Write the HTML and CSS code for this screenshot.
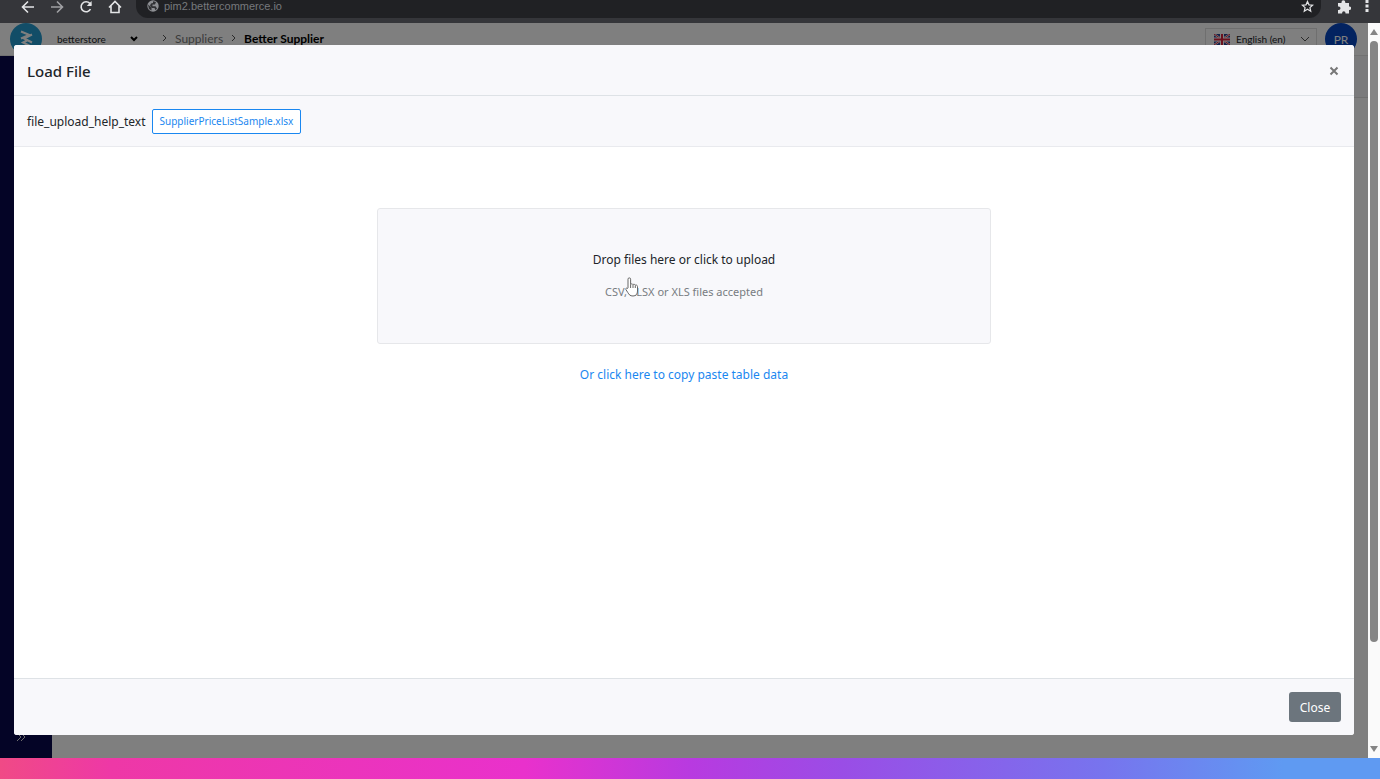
FILE: index.html
```html
<!DOCTYPE html>
<html lang="en">

<head>
    <meta charset="utf-8">
    <title>Better Supplier - Load File</title>
    <link rel="stylesheet" href="styles.css">
</head>

<body>
    <header class="browser-bar">
        <nav class="browser-nav">
            <button type="button" aria-label="Back">
                <svg width="14" height="14" viewBox="0 0 14 14"><path d="M13 7H2M7 1.5L1.5 7L7 12.5" /></svg>
            </button>
            <button type="button" aria-label="Forward" class="muted">
                <svg width="14" height="14" viewBox="0 0 14 14"><path d="M1 7h11M7 1.5L12.5 7L7 12.5" /></svg>
            </button>
            <button type="button" aria-label="Reload">
                <svg width="14" height="14" viewBox="0 0 14 14"><path d="M11.5 9.2A5 5 0 1 1 10.8 3.4L12 4.8" /><path class="fill" d="M12.6 1v5H7.8z" /></svg>
            </button>
            <button type="button" aria-label="Home">
                <svg width="14" height="14" viewBox="0 0 14 14"><path d="M1 7.500L7 1.500l6 6M3 6v6.500h8V6" /></svg>
            </button>
        </nav>
        <div class="address">
            <svg width="12" height="12" viewBox="0 0 12 12">
                <circle class="globe" cx="6" cy="6" r="5.700" />
                <path class="land" d="M1 4.500L4.500 7.500V10.500L2 9ZM6 1.200L9 2 8 4.500H5.500V6.200H8.500L10 8.500 8.500 10.300 7.500 8H5L3 5.500 4 3.600 6 3Z" />
            </svg>
            <input type="text" aria-label="Address" value="pim2.bettercommerce.io">
            <svg class="star" width="13" height="13" viewBox="0 0 14 14"><path d="M7 1.500l1.600 3.700 4 .35-3 2.650.9 3.900L7 10l-3.500 2.100.9-3.900-3-2.650 4-.35z" /></svg>
        </div>
        <div class="browser-tools">
            <button type="button" aria-label="Extensions">
                <svg width="14" height="14" viewBox="0 0 14 14"><path class="fill" d="M1 3h3.500V2.200a1.900 1.900 0 0 1 3.800 0V3H12v3.400h.4a1.800 1.800 0 0 1 0 3.600H12v3.500H8.500V13a1.700 1.700 0 0 0-3.400 0v.5H1V10h.8a1.700 1.700 0 0 0 0-3.400H1z" /></svg>
            </button>
            <button type="button" aria-label="Menu">
                <svg width="4" height="14" viewBox="0 0 4 14"><path class="fill" d="M.5 0h3v3h-3zM.5 4.500h3v3h-3zM.5 9h3v3h-3z" /></svg>
            </button>
        </div>
    </header>

    <main class="viewport">
        <div class="app">
            <div class="topbar">
                <svg class="logo" width="32" height="32" viewBox="0 0 32 32">
                    <circle cx="16" cy="16" r="16" />
                    <path d="M11 8.500l8 3.300-8 3.700M22 11.500l-8 4 8 4M18 17l-5 2.500 8 4" />
                </svg>
                <select class="store" aria-label="Store">
                    <option>betterstore</option>
                </select>
                <svg class="caret" width="8" height="6" viewBox="0 0 8 6"><path d="M1 1l3 3 3-3" /></svg>
                <nav class="crumbs">
                    <svg width="5" height="8" viewBox="0 0 5 8"><path d="M1 1l3 3-3 3" /></svg>
                    <a href="#">Suppliers</a>
                    <svg width="5" height="8" viewBox="0 0 5 8"><path d="M1 1l3 3-3 3" /></svg>
                    <strong>Better Supplier</strong>
                </nav>
                <div class="language">
                    <svg width="16" height="11" viewBox="0 0 16 11">
                        <path fill="#26408f" d="M0 0h16v11H0z" />
                        <path stroke="#fff" stroke-width="2" d="M0 0l16 11M16 0L0 11" />
                        <path stroke="#d8213d" d="M0 0l16 11M16 0L0 11" />
                        <path stroke="#fff" stroke-width="4" d="M8 0v11M0 5.500h16" />
                        <path stroke="#d8213d" stroke-width="2" d="M8 0v11M0 5.500h16" />
                    </svg>
                    <select aria-label="Language">
                        <option>English (en)</option>
                    </select>
                    <svg width="8" height="6" viewBox="0 0 8 6"><path class="line" d="M0 1l4 4 4-4" /></svg>
                </div>
                <button type="button" class="avatar">PR</button>
            </div>
            <div class="workspace">
                <aside class="sidebar">
                    <button type="button" aria-label="Expand menu">
                        <svg width="10" height="10" viewBox="0 0 10 10"><path d="M1 1l4 4-4 4M5 1l4 4-4 4" /></svg>
                    </button>
                </aside>
                <div class="content">
                    <div class="content-head"></div>
                </div>
            </div>

            <div class="backdrop">
                <section class="modal" role="dialog" aria-labelledby="modalTitle">
                    <div class="modal-header">
                        <h1 id="modalTitle">Load File</h1>
                        <button type="button" class="dismiss" aria-label="Dismiss">
                            <svg width="10" height="10" viewBox="0 0 10 10"><path d="M1.500 1.500l7 7M8.500 1.500l-7 7" /></svg>
                        </button>
                    </div>
                    <div class="modal-help">
                        <span>file_upload_help_text</span>
                        <a href="#" class="sample">SupplierPriceListSample.xlsx</a>
                    </div>
                    <div class="modal-body">
                        <button type="button" class="dropzone">
                            <span class="drop-title">Drop files here or click to upload</span>
                            <span class="drop-note">CSV, XLSX or XLS files accepted
                                <svg class="pointer" width="14" height="20" viewBox="0 0 14 20">
                                    <path d="M3 11V2.200a1.300 1.300 0 0 1 2.600 0V7.500c.5-.9 2-.8 2.400.2.700-.7 1.900-.5 2.300.5.900-.5 2.200 0 2.200 1.300V14c0 3-1.500 5-4.500 5-3 0-4-1.500-5.200-3.500L.9 12.500C.4 11.300 1.800 10.300 3 12" />
                                    <path d="M5.600 7.500V11M8 8v3M10.300 8.500V11" />
                                </svg>
                            </span>
                        </button>
                        <a href="#" class="paste">Or click here to copy paste table data</a>
                    </div>
                    <div class="modal-footer">
                        <button type="button" class="close">Close</button>
                    </div>
                </section>
            </div>
        </div>
        <div class="scrollbar">
            <svg width="8" height="6" viewBox="0 0 8 6"><path d="M4 0l4 6H0z" /></svg>
            <div class="track">
                <div class="thumb"></div>
            </div>
            <svg width="8" height="6" viewBox="0 0 8 6"><path d="M4 6L0 0h8z" /></svg>
        </div>
    </main>

    <footer class="ribbon"></footer>
</body>

</html>
```
FILE: styles.css
```css
* {
    box-sizing: border-box;
}

body {
    margin: 0;
    height: 100vh;
    display: flex;
    flex-direction: column;
    overflow: hidden;
    font-family: "Noto Sans", "Open Sans", sans-serif;
    font-size: 12px;
    color: #212529;
}

button,
input,
select {
    font: inherit;
    color: inherit;
    border: none;
    background: none;
    padding: 0;
    margin: 0;
}

button {
    cursor: pointer;
}

select {
    appearance: none;
}

a {
    color: #1a87f0;
    text-decoration: none;
}

svg {
    display: block;
    flex: none;
    fill: none;
}

/* browser bar */
.browser-bar {
    flex: none;
    display: flex;
    align-items: flex-start;
    height: 23px;
    padding: 0 11px 0 21px;
    background: #35363a;
}

.browser-bar svg {
    stroke: #e4e5e7;
    stroke-width: 1.6;
}

.browser-bar .fill {
    fill: #e4e5e7;
    stroke: none;
}

.browser-nav {
    display: flex;
    gap: 15px;
}

.browser-nav .muted svg {
    stroke: #a0a1a4;
}

.address {
    flex: 1;
    display: flex;
    align-items: center;
    gap: 5px;
    height: 18px;
    margin: 0 16px 0 14px;
    padding: 0 7px 6px 11px;
    border-radius: 0 0 12px 12px;
    background: #202124;
}

.address input {
    flex: 1;
    height: 12px;
    font-family: "Liberation Sans", Arial, sans-serif;
    font-size: 11px;
    color: #77797d;
}

.address .globe {
    fill: #8d8f93;
    stroke: none;
}

.address .land {
    fill: #303134;
    stroke: none;
}

.address .star {
    stroke-width: 1.3;
}

.browser-tools {
    display: flex;
    gap: 14px;
}

/* app page */
.viewport {
    flex: 1;
    display: flex;
    min-height: 0;
}

.app {
    position: relative;
    flex: 1;
    display: flex;
    flex-direction: column;
    background: #fff;
}

.topbar {
    display: flex;
    align-items: center;
    height: 33px;
    padding: 0 11px 0 10px;
    border-bottom: 1px solid #e4e4e4;
    font-family: Lato, sans-serif;
}

.logo circle {
    fill: #249bcf;
}

.logo path {
    stroke: #fff;
    stroke-width: 2;
}

.store {
    width: 72px;
    margin-left: 15px;
    font-family: Lato, sans-serif;
    font-size: 10px;
}

.caret {
    margin-left: 1px;
}

.caret path {
    stroke: #000;
    stroke-width: 2;
}

.crumbs {
    flex: 1;
    display: flex;
    align-items: center;
    gap: 8px;
    height: 30px;
    margin-left: 24px;
    padding-bottom: 2px;
    color: #000;
}

.crumbs strong {
    letter-spacing: normal;
}

.crumbs svg,
.language .line {
    stroke: #555;
}

.crumbs a {
    color: #777;
}

.language {
    display: flex;
    align-items: center;
    gap: 6px;
    height: 22px;
    padding: 0 7px 0 8px;
    margin-right: 8px;
    border: 1px solid #dedede;
    font-size: 10px;
}

.language select {
    width: 59px;
}

.avatar {
    width: 32px;
    height: 32px;
    border-radius: 50%;
    background: #0646c0;
    color: #fff;
}

.workspace {
    flex: 1;
    display: flex;
}

.sidebar {
    display: flex;
    align-items: flex-end;
    width: 52px;
    padding: 0 16px 16px;
    background: #08084c;
}

.sidebar svg {
    stroke: #ddd;
}

.content {
    flex: 1;
}

.content-head {
    height: 42px;
    background: #f7f7f8;
    border-bottom: 1px solid #e0e0e0;
}

/* modal */
.backdrop {
    position: absolute;
    inset: 0;
    display: flex;
    padding: 22px 14px 23px;
    background: rgba(0, 0, 0, 0.5);
}

.modal {
    flex: 1;
    display: flex;
    flex-direction: column;
    border-radius: 3px;
    background: #fff;
    overflow: hidden;
}

.modal-header,
.modal-help,
.modal-footer {
    display: flex;
    align-items: center;
    padding: 0 13px;
    background: #f8f8fb;
}

.modal-header {
    justify-content: space-between;
    height: 51px;
    padding-top: 2px;
    padding-right: 15px;
    border-bottom: 1px solid #dee2e6;
}

.modal-header h1 {
    margin: 0;
    font-size: 15px;
    font-weight: 500;
}

.dismiss svg {
    stroke: #777;
    stroke-width: 2;
}

.modal-help {
    gap: 6px;
    height: 51px;
    border-bottom: 1px solid #e9eaee;
}

.sample {
    padding: 0 7px;
    border: 1px solid #1a87f0;
    border-radius: 2px;
    background: #fff;
    font-size: 10px;
    line-height: 23px;
}

.modal-body {
    flex: 1;
    display: flex;
    flex-direction: column;
    align-items: center;
    padding: 61px 3px 0;
}

.dropzone {
    display: flex;
    flex-direction: column;
    align-items: center;
    justify-content: center;
    gap: 16px;
    width: 46%;
    height: 136px;
    border: 1px solid #e6e7ea;
    border-radius: 3px;
    background: #f8f8fb;
    line-height: 16px;
}

.drop-note {
    position: relative;
    font-size: 11px;
    color: #777c81;
}

.pointer {
    position: absolute;
    left: 20px;
    top: -7px;
    fill: #fff;
    stroke: #666;
}

.paste {
    margin-top: 23px;
    line-height: 16px;
}

.modal-footer {
    justify-content: flex-end;
    height: 57px;
    border-top: 1px solid #dee2e6;
}

.close {
    width: 52px;
    height: 30px;
    border-radius: 3px;
    background: #6c757d;
    color: #fff;
}

/* page scrollbar */
.scrollbar {
    display: flex;
    flex-direction: column;
    align-items: center;
    gap: 6px;
    width: 12px;
    padding: 6px 0;
    background: #fafafa;
}

.scrollbar svg {
    fill: #858585;
}

.track {
    flex: 1;
}

.thumb {
    width: 8px;
    height: 86%;
    border-radius: 4px;
    background: #858585;
}

.ribbon {
    flex: none;
    height: 21px;
    background: linear-gradient(90deg, #f04a86, #ee38a6 8%, #e931cc 38%, #b83ae0 50%, #9a4de6 61%, #7774ee 80%, #5f9af2 93%);
}
```
